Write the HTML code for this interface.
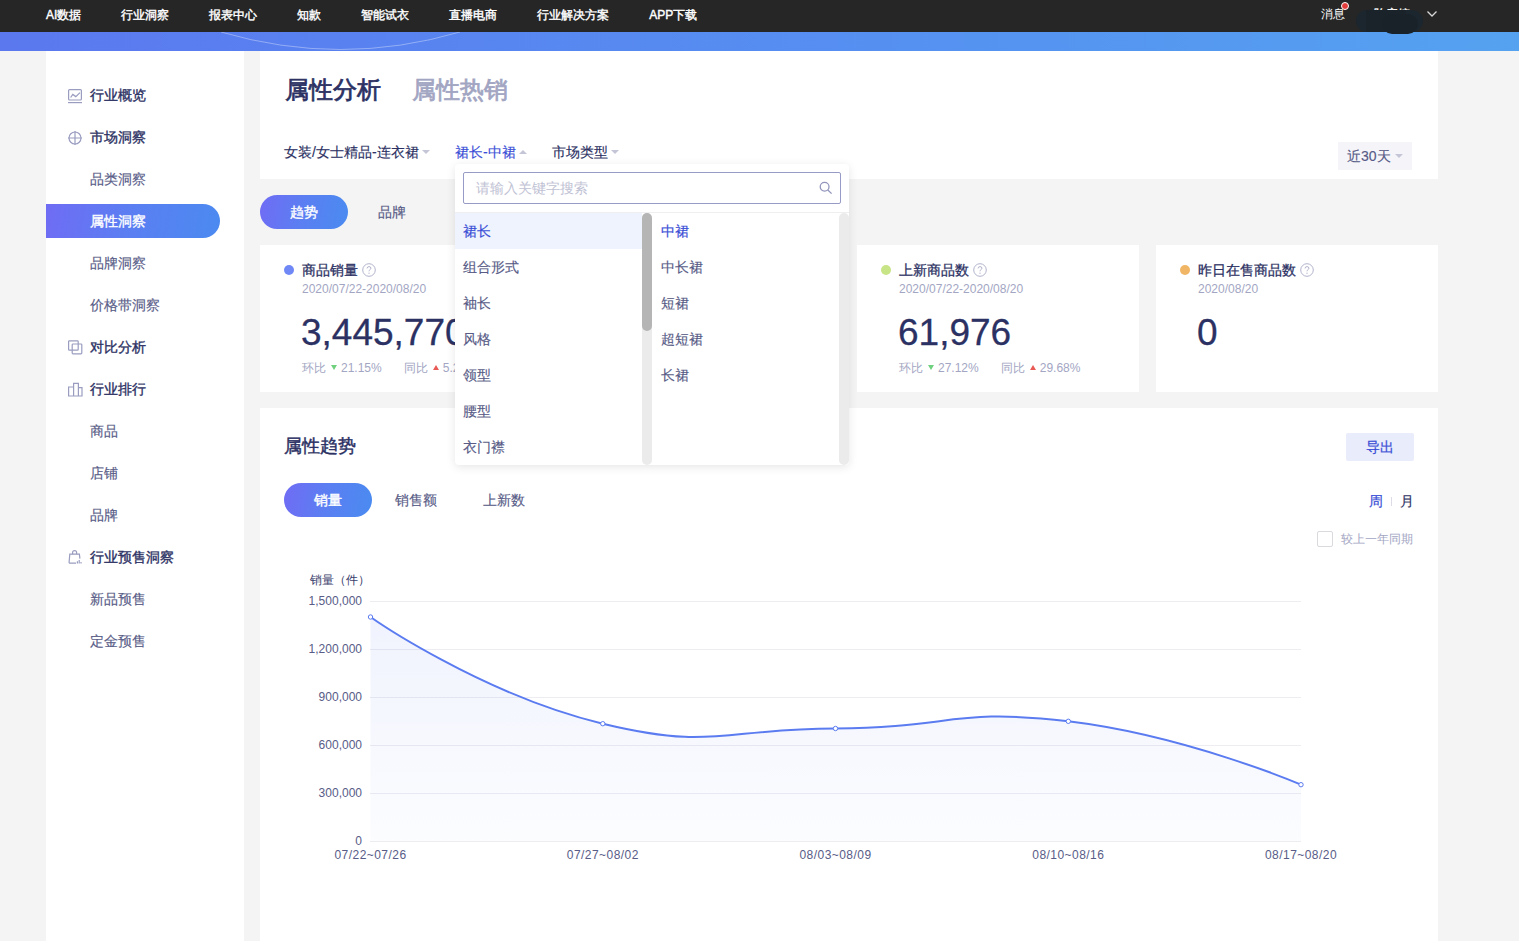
<!DOCTYPE html>
<html><head><meta charset="utf-8">
<style>
*{margin:0;padding:0;box-sizing:border-box}
html,body{width:1519px;height:941px;overflow:hidden;background:#f4f4f4;font-family:"Liberation Sans",sans-serif;color:#2c3163}
.abs{position:absolute}
#top{position:absolute;left:0;top:0;width:1519px;height:32px;background:#262626;z-index:3}
#top .nav{position:absolute;left:46px;top:0;height:32px;display:flex}
#top .nav span{color:#fff;font-size:12px;line-height:30px;margin-right:40px;-webkit-text-stroke:0.4px #fff;white-space:nowrap}
#band{position:absolute;left:0;top:32px;width:1519px;height:19px;background:linear-gradient(90deg,#5b78ef 0%,#5591f1 60%,#55a2f0 100%);overflow:hidden}
#side{position:absolute;left:46px;top:51px;width:198px;height:890px;background:#fff}
.si{position:absolute;left:0;width:198px;height:42px}
.si .t{position:absolute;left:44px;top:0;line-height:42px;font-size:14px;white-space:nowrap}
.si.top .t{color:#2c3163;-webkit-text-stroke:0.35px #2c3163}
.si.sub .t{color:#585c87;-webkit-text-stroke:0.15px #585c87}
.si.act .pill{position:absolute;left:0;top:4px;width:174px;height:34px;border-radius:0 17px 17px 0;background:linear-gradient(100deg,#6f6cf4 0%,#5a7ff2 50%,#4b8af0 100%)}
.si.act .t{color:#fff;-webkit-text-stroke:0.35px #fff}
.si svg{position:absolute;left:21px;top:14px}
.card{position:absolute;background:#fff}
.title1{position:absolute;left:285px;top:74px;font-size:24px;-webkit-text-stroke:0.75px #2c3163;line-height:32px;color:#2c3163;white-space:nowrap}
.title2{position:absolute;left:412px;top:74px;font-size:24px;-webkit-text-stroke:0.75px #a2a5c2;line-height:32px;color:#a2a5c2;white-space:nowrap}
.flt{position:absolute;top:141px;line-height:22px;font-size:14px;color:#2c3163;white-space:nowrap;-webkit-text-stroke:0.15px currentColor}
.caret{display:inline-block;width:0;height:0;border-left:4px solid transparent;border-right:4px solid transparent;border-top:4px solid #c4c5d6;vertical-align:middle;margin-left:3px;position:relative;top:-1px}
.caret.up{border-top:0;border-bottom:4px solid #c4c5d6}
.pilltab{position:absolute;height:34px;width:88px;border-radius:17px;background:linear-gradient(100deg,#706cf4 0%,#5a7ff2 50%,#4a8bf0 100%);color:#fff;-webkit-text-stroke:0.35px #fff;font-size:14px;line-height:34px;text-align:center}
.tab{position:absolute;height:34px;width:88px;font-size:14px;line-height:34px;text-align:center;color:#585c87;-webkit-text-stroke:0.15px #585c87}
.stat .dot{position:absolute;left:24px;top:20px;width:10px;height:10px;border-radius:50%}
.stat .nm{position:absolute;left:42px;top:14px;font-size:14px;-webkit-text-stroke:0.28px #2c3163;line-height:22px;color:#2c3163;white-space:nowrap}
.stat .q{display:inline-block;vertical-align:middle;margin-left:4px;position:relative;top:-1px;-webkit-text-stroke:0}
.stat .dt{position:absolute;left:42px;top:36px;font-size:12px;line-height:16px;color:#a3a6c3;white-space:nowrap}
.stat .big{position:absolute;left:41px;top:66px;font-size:37px;line-height:44px;color:#2c3163;-webkit-text-stroke:0.3px #2c3163;white-space:nowrap}
.stat .cmp{position:absolute;left:42px;top:114px;font-size:12px;line-height:18px;color:#a3a6c3;white-space:nowrap}
.tri{display:inline-block;width:0;height:0;border-left:3.5px solid transparent;border-right:3.5px solid transparent;vertical-align:middle;position:relative;top:-1px;margin:0 4px 0 5px}
.tri.dn{border-top:5px solid #6fd07d}
.tri.upr{border-bottom:5px solid #e85a55}
</style></head><body>
<div id="top">
  <div class="nav"><span>AI数据</span><span>行业洞察</span><span>报表中心</span><span>知款</span><span>智能试衣</span><span>直播电商</span><span>行业解决方案</span><span>APP下载</span></div>
  <div class="abs" style="left:1321px;top:0;line-height:28px;font-size:12px;color:#fff;font-weight:500">消息</div>
  <div class="abs" style="left:1341px;top:2px;width:8px;height:8px;border-radius:50%;background:#e43b3b;border:1px solid #fff"></div>
  <div class="abs" style="left:1374px;top:7px;line-height:14px;font-size:12px;color:#fff;-webkit-text-stroke:0.3px #fff">陈彦婷</div>
  <div class="abs" style="left:1356px;top:10px;width:67px;height:22px;border-radius:11px;background:#1c262e"></div>
  <div class="abs" style="left:1366px;top:10px;width:40px;height:22px;background:#1a232a"></div>
  <div class="abs" style="left:1382px;top:14px;width:36px;height:20px;border-radius:10px;background:#1a2229"></div>
  <svg class="abs" style="left:1426px;top:9px" width="12" height="10" viewBox="0 0 12 10"><path d="M1.5,2.5 L6,7 L10.5,2.5" fill="none" stroke="#d8d8d8" stroke-width="1.3"/></svg>
</div>
<div id="band">
  <svg class="abs" style="left:0;top:0" width="1519" height="19"><path d="M221,0 Q340.5,35 460,0" fill="none" stroke="rgba(255,255,255,0.35)" stroke-width="1"/></svg>
</div>
<div id="side">
  <div class="si top" style="top:23px"><svg width="16" height="16" viewBox="0 0 16 16"><g fill="none" stroke="#9a9dc0" stroke-width="1.2"><rect x="1.6" y="1.6" width="12.8" height="10.4" rx="1"/><path d="M3.6,9.5 L5.8,6.4 L8.8,8.6 L13,4.6"/><path d="M1,14.6 H15"/></g></svg><div class="t">行业概览</div></div>
  <div class="si top" style="top:65px"><svg width="16" height="16" viewBox="0 0 16 16"><g fill="none" stroke="#9a9dc0" stroke-width="1.2"><circle cx="8" cy="8" r="6"/><path d="M8,1 V15 M1,8 H15"/></g></svg><div class="t">市场洞察</div></div>
  <div class="si sub" style="top:107px"><div class="t">品类洞察</div></div>
  <div class="si sub act" style="top:149px"><div class="pill"></div><div class="t">属性洞察</div></div>
  <div class="si sub" style="top:191px"><div class="t">品牌洞察</div></div>
  <div class="si sub" style="top:233px"><div class="t">价格带洞察</div></div>
  <div class="si top" style="top:275px"><svg width="16" height="16" viewBox="0 0 16 16"><g fill="none" stroke="#9a9dc0" stroke-width="1.2"><rect x="1.6" y="0.8" width="9.6" height="9.4" rx="0.8"/><rect x="5.2" y="4" width="9.6" height="9.8" rx="0.8"/></g></svg><div class="t">对比分析</div></div>
  <div class="si top" style="top:317px"><svg width="16" height="16" viewBox="0 0 16 16"><g fill="none" stroke="#9a9dc0" stroke-width="1.2"><path d="M1.6,14 V5 H6.6 V14 Z M6.6,14 V1.4 H11.4 V14 Z M11.4,14 V5.6 H15 V14 Z"/></g></svg><div class="t">行业排行</div></div>
  <div class="si sub" style="top:359px"><div class="t">商品</div></div>
  <div class="si sub" style="top:401px"><div class="t">店铺</div></div>
  <div class="si sub" style="top:443px"><div class="t">品牌</div></div>
  <div class="si top" style="top:485px"><svg style="top:13px" width="16" height="16" viewBox="0 0 16 16"><g fill="none" stroke="#9a9dc0" stroke-width="1.2"><path d="M9,14.2 H3 Q2,14.2 2.1,13 L2.8,5.2 H12.4 L12.9,9.6"/><path d="M5.6,5.2 V3.6 Q5.6,1.6 7.6,1.6 Q9.6,1.6 9.6,3.6 V5.2"/><path d="M10.4,12.2 V14.4 M12.2,11 V14.4 M14,13 V14.4"/></g></svg><div class="t">行业预售洞察</div></div>
  <div class="si sub" style="top:527px"><div class="t">新品预售</div></div>
  <div class="si sub" style="top:569px"><div class="t">定金预售</div></div>
</div>

<div class="card" style="left:260px;top:51px;width:1178px;height:128px"></div>
<div class="title1">属性分析</div>
<div class="title2">属性热销</div>
<div class="flt" style="left:284px">女装/女士精品-连衣裙<span class="caret"></span></div>
<div class="flt" style="left:455px;color:#3b4fd6;-webkit-text-stroke:0.15px #3b4fd6">裙长-中裙<span class="caret up"></span></div>
<div class="flt" style="left:552px">市场类型<span class="caret"></span></div>
<div class="abs" style="left:1338px;top:142px;width:74px;height:28px;background:#f5f5f9;font-size:14px;line-height:28px;color:#575b87;padding-left:9px;white-space:nowrap;-webkit-text-stroke:0.15px #575b87">近30天<span class="caret" style="margin-left:4px"></span></div>

<div class="pilltab" style="left:260px;top:195px">趋势</div>
<div class="tab" style="left:348px;top:195px">品牌</div>

<div class="card stat" style="left:260px;top:245px;width:282px;height:147px">
  <div class="dot" style="background:#7088f6"></div>
  <div class="nm">商品销量<svg class="q" width="14" height="14" viewBox="0 0 14 14"><circle cx="7" cy="7" r="6.3" fill="none" stroke="#a9abc6" stroke-width="0.9"/><path d="M5.1,5.4 Q5.1,3.6 7,3.6 Q8.9,3.6 8.9,5.2 Q8.9,6.2 7.8,6.8 Q7,7.2 7,8.3" fill="none" stroke="#a9abc6" stroke-width="0.9"/><circle cx="7" cy="10.2" r="0.6" fill="#a9abc6"/></svg></div>
  <div class="dt">2020/07/22-2020/08/20</div>
  <div class="big">3,445,770</div>
  <div class="cmp">环比<span class="tri dn"></span>21.15%<span style="display:inline-block;width:22px"></span>同比<span class="tri upr"></span>5.21%</div>
</div>
<div class="card stat" style="left:559px;top:245px;width:281px;height:147px">
  <div class="dot" style="background:#f08a6c"></div>
  <div class="nm">商品销售额<svg class="q" width="14" height="14" viewBox="0 0 14 14"><circle cx="7" cy="7" r="6.3" fill="none" stroke="#a9abc6" stroke-width="0.9"/><path d="M5.1,5.4 Q5.1,3.6 7,3.6 Q8.9,3.6 8.9,5.2 Q8.9,6.2 7.8,6.8 Q7,7.2 7,8.3" fill="none" stroke="#a9abc6" stroke-width="0.9"/><circle cx="7" cy="10.2" r="0.6" fill="#a9abc6"/></svg></div>
  <div class="dt">2020/07/22-2020/08/20</div>
  <div class="big">436,556,117</div>
</div>
<div class="card stat" style="left:857px;top:245px;width:282px;height:147px">
  <div class="dot" style="background:#c7e486"></div>
  <div class="nm">上新商品数<svg class="q" width="14" height="14" viewBox="0 0 14 14"><circle cx="7" cy="7" r="6.3" fill="none" stroke="#a9abc6" stroke-width="0.9"/><path d="M5.1,5.4 Q5.1,3.6 7,3.6 Q8.9,3.6 8.9,5.2 Q8.9,6.2 7.8,6.8 Q7,7.2 7,8.3" fill="none" stroke="#a9abc6" stroke-width="0.9"/><circle cx="7" cy="10.2" r="0.6" fill="#a9abc6"/></svg></div>
  <div class="dt">2020/07/22-2020/08/20</div>
  <div class="big">61,976</div>
  <div class="cmp">环比<span class="tri dn"></span>27.12%<span style="display:inline-block;width:22px"></span>同比<span class="tri upr"></span>29.68%</div>
</div>
<div class="card stat" style="left:1156px;top:245px;width:282px;height:147px">
  <div class="dot" style="background:#f0b665"></div>
  <div class="nm">昨日在售商品数<svg class="q" width="14" height="14" viewBox="0 0 14 14"><circle cx="7" cy="7" r="6.3" fill="none" stroke="#a9abc6" stroke-width="0.9"/><path d="M5.1,5.4 Q5.1,3.6 7,3.6 Q8.9,3.6 8.9,5.2 Q8.9,6.2 7.8,6.8 Q7,7.2 7,8.3" fill="none" stroke="#a9abc6" stroke-width="0.9"/><circle cx="7" cy="10.2" r="0.6" fill="#a9abc6"/></svg></div>
  <div class="dt">2020/08/20</div>
  <div class="big">0</div>
</div>

<div class="card" style="left:260px;top:408px;width:1178px;height:533px"></div>
<div class="abs" style="left:284px;top:433px;font-size:18px;-webkit-text-stroke:0.45px #2c3163;line-height:26px;color:#2c3163">属性趋势</div>
<div class="abs" style="left:1346px;top:433px;width:68px;height:28px;border-radius:2px;background:#e9ecfb;color:#3b4fd6;-webkit-text-stroke:0.25px #3b4fd6;font-size:14px;line-height:28px;text-align:center">导出</div>
<div class="pilltab" style="left:284px;top:483px">销量</div>
<div class="tab" style="left:372px;top:483px">销售额</div>
<div class="tab" style="left:460px;top:483px">上新数</div>
<div class="abs" style="left:1369px;top:490px;font-size:14px;line-height:22px;color:#3b4fd6;-webkit-text-stroke:0.2px #3b4fd6">周</div>
<div class="abs" style="left:1391px;top:497px;width:1px;height:9px;background:#dcdce6"></div>
<div class="abs" style="left:1400px;top:490px;font-size:14px;line-height:22px;color:#2c3163;-webkit-text-stroke:0.15px #2c3163">月</div>
<div class="abs" style="left:1317px;top:531px;width:16px;height:16px;border:1px solid #d9d9de;border-radius:2px;background:#fff"></div>
<div class="abs" style="left:1341px;top:530px;font-size:12px;line-height:18px;color:#a3a6c3">较上一年同期</div>

<svg class="abs" style="left:0;top:0" width="1519" height="941">
  <defs><linearGradient id="ga" x1="0" y1="0" x2="0" y2="1"><stop offset="0" stop-color="#5b7bf0" stop-opacity="0.09"/><stop offset="1" stop-color="#5b7bf0" stop-opacity="0.02"/></linearGradient></defs>
  <g stroke="#ececf1" stroke-width="1">
    <path d="M370,601.5 H1301 M370,649.5 H1301 M370,697.5 H1301 M370,745.5 H1301 M370,793.5 H1301 M370,841.5 H1301"/>
  </g>
  <path d="M370.5,617.0 C370.5,617.0 481.1,694.5 602.8,723.7 C713.6,750.3 719.2,729.1 835.5,728.5 C951.9,727.9 954.0,707.5 1068.3,721.3 C1186.7,735.6 1301.0,784.7 1301.0,784.7 L1301,841 L370.5,841 Z" fill="url(#ga)"/>
  <path d="M370.5,617.0 C370.5,617.0 481.1,694.5 602.8,723.7 C713.6,750.3 719.2,729.1 835.5,728.5 C951.9,727.9 954.0,707.5 1068.3,721.3 C1186.7,735.6 1301.0,784.7 1301.0,784.7" fill="none" stroke="#5b7bf0" stroke-width="2"/>
  <g fill="#fff" stroke="#5b7bf0" stroke-width="1">
    <circle cx="370.5" cy="617" r="2.2"/><circle cx="602.8" cy="723.7" r="2.2"/><circle cx="835.5" cy="728.5" r="2.2"/><circle cx="1068.3" cy="721.3" r="2.2"/><circle cx="1301" cy="784.7" r="2.2"/>
  </g>
  <g font-family="Liberation Sans, sans-serif" font-size="12" fill="#585c87" text-anchor="end">
    <text x="362" y="605">1,500,000</text><text x="362" y="653">1,200,000</text><text x="362" y="701">900,000</text><text x="362" y="749">600,000</text><text x="362" y="797">300,000</text><text x="362" y="845">0</text>
  </g>
  <g font-family="Liberation Sans, sans-serif" font-size="12" fill="#585c87" text-anchor="middle" letter-spacing="0.45">
    <text x="370.5" y="859">07/22~07/26</text><text x="602.8" y="859">07/27~08/02</text><text x="835.5" y="859">08/03~08/09</text><text x="1068.3" y="859">08/10~08/16</text><text x="1301" y="859">08/17~08/20</text>
  </g>
  <text x="310" y="584" font-family="Liberation Sans, sans-serif" font-size="12" fill="#3a3e6c">销量（件）</text>
</svg>

<div id="dd" class="abs" style="left:455px;top:164px;width:394px;height:301px;background:#fff;border-radius:4px;box-shadow:0 2px 10px rgba(0,0,0,0.10)">
  <div class="abs" style="left:8px;top:8px;width:378px;height:32px;border:1px solid #979cc6;border-radius:2px;font-size:14px;line-height:30px;color:#c0c2d4;padding-left:12px">请输入关键字搜索</div>
  <svg class="abs" style="left:364px;top:17px" width="14" height="14" viewBox="0 0 14 14"><g fill="none" stroke="#9195bb" stroke-width="1.3"><circle cx="5.6" cy="5.8" r="4.4"/><path d="M8.8,9 L12.6,12.6"/></g></svg>
  <div class="abs" style="left:0;top:48px;width:394px;height:1px;background:#efeff2"></div>
  <div class="abs" style="left:0;top:49px;width:187px;height:36px;background:#eef3fd"></div>
  <div class="abs" style="left:187px;top:49px;width:10px;height:252px;background:#ebebeb;border-radius:5px"></div>
  <div class="abs" style="left:187px;top:49px;width:10px;height:118px;background:#b5b5b5;border-radius:5px"></div>
  <div class="abs" style="left:384px;top:49px;width:10px;height:252px;background:#ebebeb;border-radius:5px"></div>
  <div class="abs ddl" style="left:8px;top:49px;font-size:14px;line-height:36px;color:#585c87;-webkit-text-stroke:0.15px currentColor">
    <div style="color:#3b4fd6;-webkit-text-stroke:0.2px #3b4fd6">裙长</div><div>组合形式</div><div>袖长</div><div>风格</div><div>领型</div><div>腰型</div><div>衣门襟</div>
  </div>
  <div class="abs ddr" style="left:206px;top:49px;font-size:14px;line-height:36px;color:#585c87;-webkit-text-stroke:0.15px currentColor">
    <div style="color:#3b4fd6;-webkit-text-stroke:0.2px #3b4fd6">中裙</div><div>中长裙</div><div>短裙</div><div>超短裙</div><div>长裙</div>
  </div>
</div>
</body></html>
